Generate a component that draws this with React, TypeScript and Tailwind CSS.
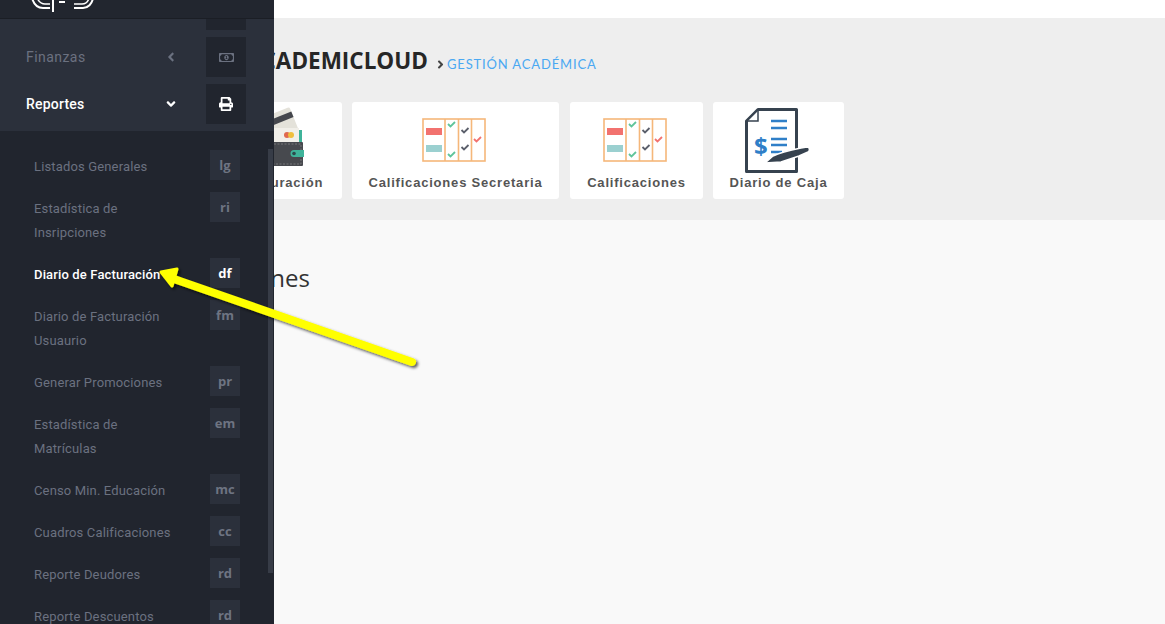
import React from "react";
import { FaAngleDown, FaAngleLeft, FaAngleRight, FaPrint, FaRegMoneyBillAlt } from "react-icons/fa";

type SubItem = { label: string; badge: string; active?: boolean };

const subItems: SubItem[] = [
  { label: "Listados Generales", badge: "lg" },
  { label: "Estadística de Insripciones", badge: "ri" },
  { label: "Diario de Facturación", badge: "df", active: true },
  { label: "Diario de Facturación Usuaurio", badge: "fm" },
  { label: "Generar Promociones", badge: "pr" },
  { label: "Estadística de Matrículas", badge: "em" },
  { label: "Censo Min. Educación", badge: "mc" },
  { label: "Cuadros Calificaciones", badge: "cc" },
  { label: "Reporte Deudores", badge: "rd" },
  { label: "Reporte Descuentos", badge: "rd" },
];

function Check({ x, y, color }: { x: number; y: number; color: string }) {
  return <path d={`M${x} ${y}l2.5 2.5 4.5-4.5`} fill="none" stroke={color} strokeWidth="1.8" />;
}

function GradesIcon() {
  return (
    <svg width="64" height="44" viewBox="0 0 64 44">
      <g fill="none" stroke="#f5b77a" strokeWidth="1.6">
        <rect x="1" y="1" width="62" height="42" />
        <path d="M23 1v42M36.5 1v42M49.5 1v42" />
      </g>
      <rect x="4" y="10" width="16" height="7" fill="#f2726f" />
      <rect x="4" y="27" width="16" height="7" fill="#9bd0d0" />
      <Check x={26} y={6} color="#5fc49a" />
      <Check x={26} y={36} color="#5fc49a" />
      <Check x={39.5} y={12} color="#5b5f6b" />
      <Check x={39.5} y={29} color="#5b5f6b" />
      <Check x={52} y={21} color="#f2726f" />
    </svg>
  );
}

function WalletIcon() {
  return (
    <svg width="64" height="60" viewBox="0 0 64 60">
      <g transform="rotate(-22 30 24)">
        <rect x="6" y="8" width="46" height="26" rx="2" fill="#e4e2da" />
        <rect x="6" y="13" width="46" height="6" fill="#45474d" />
      </g>
      <rect x="8" y="22" width="46" height="20" fill="#f1efe9" />
      <rect x="54" y="24" width="3" height="14" fill="#3fb39a" />
      <circle cx="42" cy="29" r="3" fill="#e0694f" />
      <circle cx="46" cy="29" r="3" fill="#f0bf3c" />
      <rect x="6" y="36" width="52" height="24" rx="1" fill="#47494e" />
      <rect x="8" y="38" width="48" height="20" fill="none" stroke="#8a8b8d" strokeWidth="0.7" strokeDasharray="2 1.5" />
      <path d="M59 44h-10a3.5 3.5 0 0 0 0 7h10z" fill="#3fb39a" />
      <circle cx="49" cy="47.5" r="1.8" fill="#2d4a4d" />
    </svg>
  );
}

function ReceiptIcon() {
  return (
    <svg width="66" height="66" viewBox="0 0 66 66">
      <path d="M1.5 63.5V13L13 1.5h38.5v62z" fill="none" stroke="#36424f" strokeWidth="3" strokeLinejoin="round" />
      <path d="M3 13h10V3" fill="#fff" stroke="#36424f" strokeWidth="1.5" />
      <path d="M26 13h16M26 20h16M26 31h16M26 37h16M26 44h11" stroke="#2f7fc8" strokeWidth="2.6" />
      <text x="9" y="47" fontFamily="'Open Sans', sans-serif" fontWeight="700" fontSize="24" fill="#2f7fc8">$</text>
      <path d="M20 55l8-7c8-4 18-6 28-8l6-1c3 0 3 4 1 5l-9 4-18 6z" fill="#36424f" stroke="#fff" strokeWidth="1.5" />
    </svg>
  );
}

const cards: { label: string; icon: React.ReactNode; box: string; iconBox: string }[] = [
  { label: "Facturación", icon: <WalletIcon />, box: "w-[120px]", iconBox: "pr-[11px] pt-[4px]" },
  { label: "Calificaciones Secretaria", icon: <GradesIcon />, box: "w-[207px]", iconBox: "pr-[3px] pt-[16px]" },
  { label: "Calificaciones", icon: <GradesIcon />, box: "ml-[1px] w-[133px]", iconBox: "pr-[3px] pt-[16px]" },
  { label: "Diario de Caja", icon: <ReceiptIcon />, box: "w-[131px]", iconBox: "pr-[1px] pt-[6px]" },
];

function Sidebar() {
  return (
    <aside className="absolute left-0 top-0 flex h-[624px] w-[274px] flex-col overflow-hidden bg-[#21252e] font-['Roboto',sans-serif]">
      <div className="h-[18px] shrink-0 overflow-hidden bg-[#22262f]">
        <svg width="110" height="18" viewBox="0 0 110 18" fill="none" stroke="#fff" strokeWidth="2">
          <path d="M32 -2c2 7 6 10 11 10h7" />
          <path d="M37 -2c2 4 4 6 8 6h5" strokeWidth="1.5" />
          <path d="M53 0v12" />
          <path d="M59 2h6" />
          <path d="M74 8h9c5 0 9-4 10-10" />
          <path d="M74 4h8c4 0 6-2 7-6" strokeWidth="1.5" />
        </svg>
      </div>
      <div className="h-px shrink-0 bg-[#1b1e25]" />
      <div className="relative h-[112px] shrink-0 overflow-hidden bg-[#2b303b]">
        <div className="-mt-[29px] flex flex-col">
          <div className="flex h-[47px] justify-end pr-[28px]">
            <div className="h-[40px] w-[40px] bg-[#21252e]" />
          </div>
          <div className="flex h-[47px] items-start pl-[26px] pr-[28px] text-[14px] text-[#6b7180]">
            <span className="flex h-[40px] flex-1 items-center tracking-[0.45px]">Finanzas</span>
            <FaAngleLeft className="mr-[28px] mt-[13px] text-[14px]" />
            <div className="flex h-[40px] w-[40px] items-center justify-center bg-[#21252e] text-[15px]">
              <FaRegMoneyBillAlt />
            </div>
          </div>
          <div className="flex h-[47px] items-start pl-[26px] pr-[28px] text-[14px] font-medium text-white">
            <span className="flex h-[40px] flex-1 items-center tracking-[0.2px]">Reportes</span>
            <FaAngleDown className="mr-[28px] mt-[13px] text-[14px]" />
            <div className="flex h-[40px] w-[40px] items-center justify-center bg-[#21252e] text-[14px]">
              <FaPrint />
            </div>
          </div>
        </div>
      </div>
      <ul className="relative flex flex-col pt-[19px]">
        {subItems.map((item) => (
          <li key={item.label + item.badge} className="flex items-start pb-[12px] pl-[34px] pr-[34px]">
            <span
              className={`flex-1 pr-[30px] pt-[5px] pb-[1px] text-[13px] leading-[24px] tracking-[0.15px] ${item.active ? "font-medium text-white" : "text-[#6b7180]"}`}
            >
              {item.label}
            </span>
            <span
              className={`flex h-[30px] w-[30px] shrink-0 items-center justify-center bg-[#2b303b] pt-[1px] font-['Open_Sans',sans-serif] text-[13px] font-bold ${item.active ? "text-white" : "text-[#6e7482]"}`}
            >
              {item.badge}
            </span>
          </li>
        ))}
      </ul>
      <div className="absolute left-[268px] top-[149px] h-[424px] w-[5px] bg-[#373c47]" />
    </aside>
  );
}

function Arrow() {
  return (
    <svg className="absolute left-[150px] top-[260px]" width="280" height="120" viewBox="0 0 280 120">
      <defs>
        <filter id="arrow-shadow" x="-10%" y="-20%" width="120%" height="150%">
          <feDropShadow dx="2" dy="2" stdDeviation="1.8" floodColor="#000" floodOpacity="0.65" />
        </filter>
      </defs>
      <g filter="url(#arrow-shadow)">
        <path d="M24 19L262 102" stroke="#ffff00" strokeWidth="8" strokeLinecap="round" />
        <path d="M11 12L27 9L22 26Z" fill="#ffff00" stroke="#ffff00" strokeWidth="3" strokeLinejoin="round" />
      </g>
    </svg>
  );
}

export default function App() {
  return (
    <div className="relative h-[624px] w-full overflow-hidden bg-white font-['Open_Sans',sans-serif]">
      <div className="h-[18px] bg-white" />
      <header className="h-[202px] bg-[#eeeeee] pl-[222px]">
        <div className="flex items-baseline pl-[24px] pt-[26px]">
          <h1 className="text-[22.5px] font-bold leading-[34px] text-[#262626]">ACADEMICLOUD</h1>
          <FaAngleRight className="ml-[6px] translate-y-[2px] text-[13px] text-[#444]" />
          <span className="font-['Lato',sans-serif] text-[13px] tracking-[0.85px] text-[#4aa8f2]">GESTIÓN ACADÉMICA</span>
        </div>
        <div className="mt-[24px] flex gap-[10px]">
          {cards.map((card) => (
            <div
              key={card.label}
              className={`flex h-[97px] flex-col items-center rounded-[3px] bg-white ${card.box}`}
            >
              <div className={`flex h-[70px] items-start justify-center ${card.iconBox}`}>{card.icon}</div>
              <span className="mt-[1px] whitespace-nowrap font-['Liberation_Sans',sans-serif] text-[13px] font-bold tracking-[0.8px] text-[#555]">
                {card.label}
              </span>
            </div>
          ))}
        </div>
      </header>
      <main className="h-[404px] bg-[#f9f9f9] pl-[205px] pt-[40px]">
        <h2 className="text-[24px] leading-[36px] text-[#333]">Opciones</h2>
      </main>
      <Sidebar />
      <Arrow />
    </div>
  );
}
